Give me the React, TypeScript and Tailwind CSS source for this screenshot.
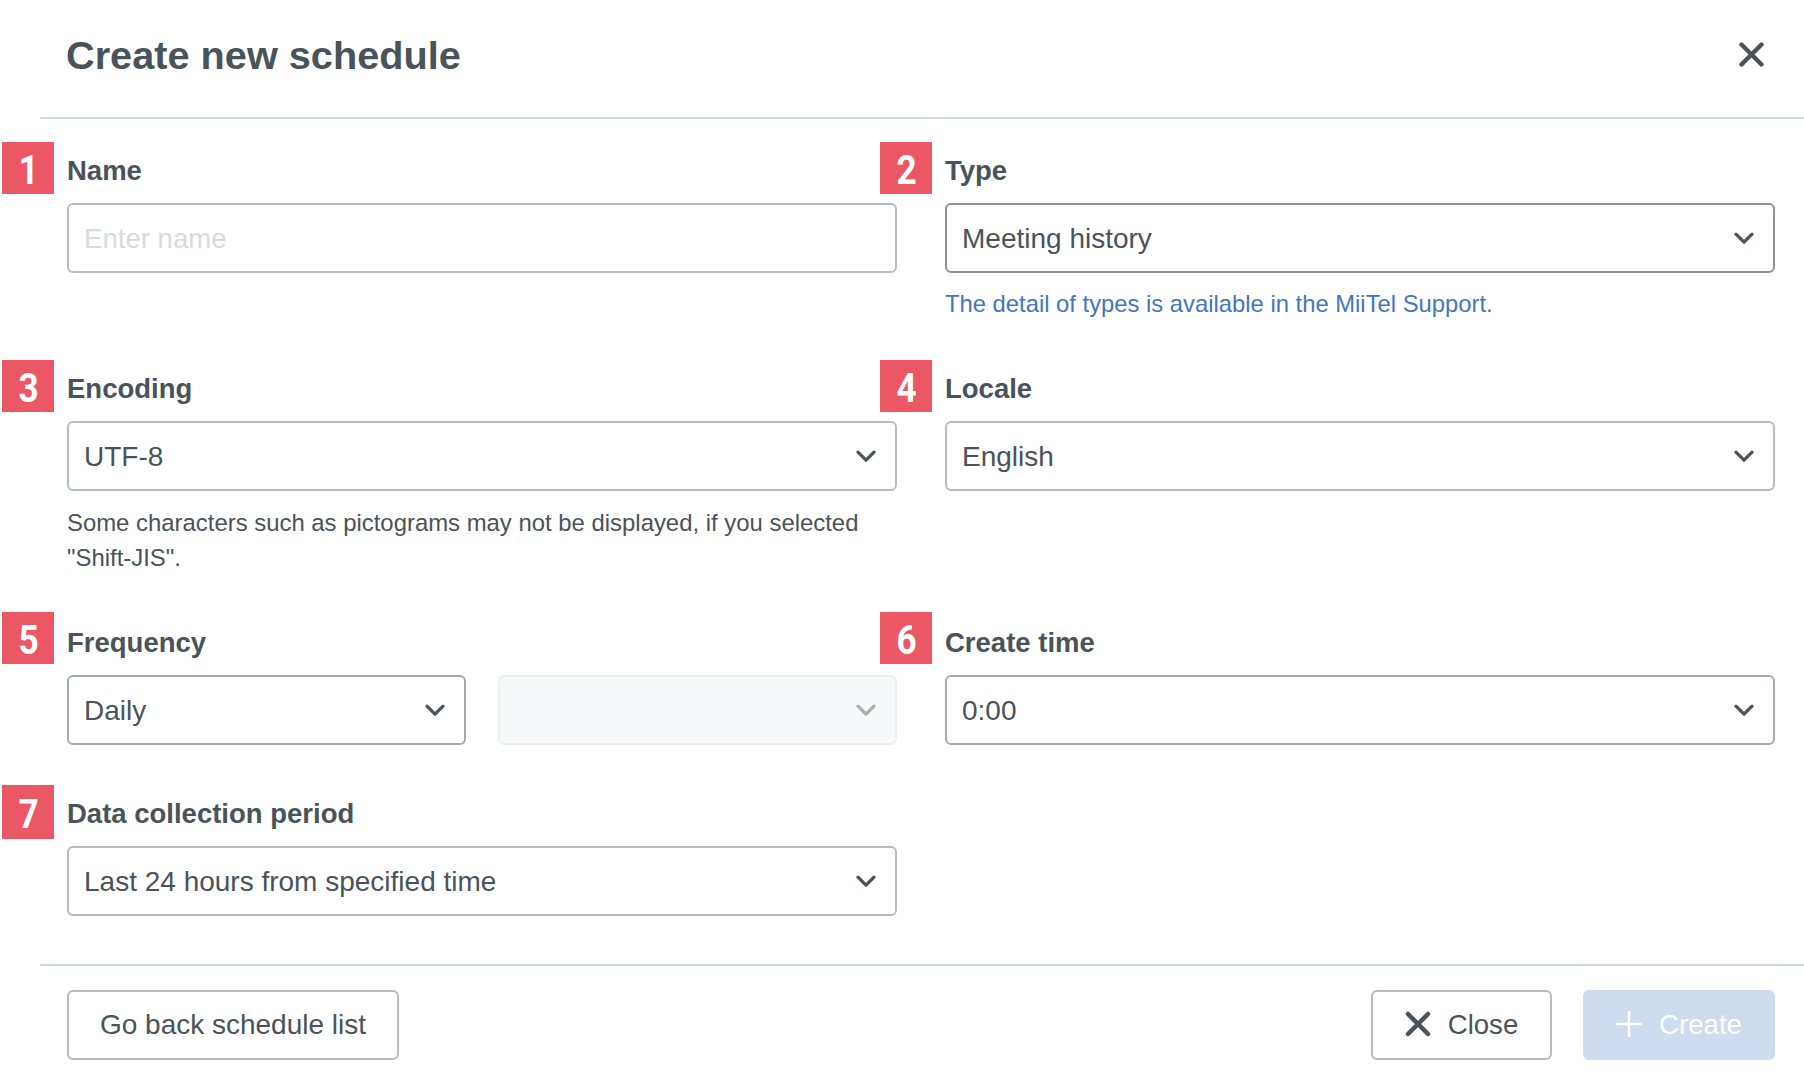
import React from "react";

const fontCls = "font-['Liberation_Sans',Arial,sans-serif]";

function Badge({ n, size = "base" }: { n: string; size?: "base" | "high" | "tall" }) {
  const box =
    size === "tall"
      ? "top-[-9px] h-[54px]"
      : size === "high"
        ? "top-[-11px] h-[52px]"
        : "top-[-9px] h-[52px]";
  return (
    <span
      className={`absolute left-[-65px] flex w-[52px] items-center justify-center bg-[#ec5766] pt-[5px] font-['Roboto',sans-serif] font-bold text-white ${box}`}
    >
      <span className="scale-x-[0.88] text-[40px] leading-none">{n}</span>
    </span>
  );
}

function Chevron({ muted }: { muted?: boolean }) {
  return (
    <svg width="20" height="13" viewBox="0 0 20 13" fill="none" className="shrink-0">
      <path
        d="M2 2.2 L10 10.2 L18 2.2"
        stroke={muted ? "#a9aeb2" : "#4a5359"}
        strokeWidth="3.2"
        strokeLinecap="round"
        strokeLinejoin="round"
      />
    </svg>
  );
}

function Select({
  value,
  borderClass = "border-[#b4bcc4]",
}: {
  value: string;
  borderClass?: string;
}) {
  return (
    <div
      role="combobox"
      aria-expanded="false"
      className={`flex h-[70px] items-center justify-between rounded-[6px] border-2 bg-white pl-[15px] pr-[19px] text-[28px] text-[#4a5359] ${borderClass}`}
    >
      <span className="pt-[1px]">{value}</span>
      <Chevron />
    </div>
  );
}

function Label({ n, text, size }: { n: string; text: string; size?: "base" | "high" | "tall" }) {
  return (
    <div className="relative mb-[12px] flex h-[40px] items-center text-[27.5px] font-bold text-[#4a5359]">
      <Badge n={n} size={size} />
      {text}
    </div>
  );
}

export default function App() {
  return (
    <div className={`h-[1080px] w-[1804px] overflow-hidden bg-white ${fontCls}`}>
      <header className="ml-[40px] flex h-[119px] items-center justify-between border-b-2 border-[#d3d8dc] pl-[26px] pr-[40px]">
        <h1 className="pb-[5px] text-[39.7px] font-bold text-[#4a5359]">Create new schedule</h1>
        <svg width="25" height="25" viewBox="0 0 25 25" fill="none" className="mb-[8px]">
          <path d="M2.5 2.5 L22.5 22.5 M22.5 2.5 L2.5 22.5" stroke="#4a5359" strokeWidth="4.4" strokeLinecap="round" />
        </svg>
      </header>

      <main className="pl-[67px] pr-[29px] pt-[32px]">
        <div className="mb-[48px] grid grid-cols-2 gap-x-[48px]">
          <div>
            <Label n="1" text="Name" />
            <input
              placeholder="Enter name"
              className="h-[70px] w-full rounded-[6px] border-2 border-[#b4bcc4] bg-white px-[15px] pt-[1px] text-[27.6px] text-[#4a5359] outline-none placeholder:text-[#d6dbdf]"
            />
          </div>
          <div>
            <Label n="2" text="Type" />
            <Select value="Meeting history" borderClass="border-[#8a9299]" />
            <p className="mt-[13px] text-[23.8px] leading-[35px] text-[#4476bb]">
              The detail of types is available in the MiiTel Support.
            </p>
          </div>
        </div>

        <div className="mb-[48px] grid grid-cols-2 gap-x-[48px]">
          <div>
            <Label n="3" text="Encoding" />
            <Select value="UTF-8" />
            <p className="mt-[14px] text-[23.9px] leading-[35px] text-[#4a5359]">
              Some characters such as pictograms may not be displayed, if you selected "Shift-JIS".
            </p>
          </div>
          <div>
            <Label n="4" text="Locale" />
            <Select value="English" />
          </div>
        </div>

        <div className="mb-[49px] grid grid-cols-2 gap-x-[48px]">
          <div>
            <Label n="5" text="Frequency" size="high" />
            <div className="grid grid-cols-2 gap-x-[32px]">
              <Select value="Daily" borderClass="border-[#a3abb3]" />
              <div className="flex h-[70px] items-center justify-end rounded-[6px] border-2 border-[#eceef0] bg-[#f7f8fa] pr-[19px]">
                <Chevron muted />
              </div>
            </div>
          </div>
          <div>
            <Label n="6" text="Create time" size="high" />
            <Select value="0:00" borderClass="border-[#a3abb3]" />
          </div>
        </div>

        <div className="mb-[48px] grid grid-cols-2 gap-x-[48px]">
          <div>
            <Label n="7" text="Data collection period" size="tall" />
            <Select value="Last 24 hours from specified time" />
          </div>
        </div>
      </main>

      <footer className="ml-[40px] flex items-center justify-between border-t-2 border-[#d3d8dc] pl-[27px] pr-[29px] pt-[24px]">
        <button className="flex h-[70px] w-[332px] items-center justify-center rounded-[6px] border-2 border-[#b4bcc4] bg-white text-[28px] text-[#4a5359]">
          Go back schedule list
        </button>
        <div className="flex items-center gap-x-[31px]">
          <button className="flex h-[70px] w-[181px] items-center justify-center gap-x-[17px] rounded-[6px] border-2 border-[#b4bcc4] bg-white text-[27.6px] text-[#4a5359]">
            <svg width="26" height="26" viewBox="0 0 26 26" fill="none" className="mb-[2px]">
              <path d="M3 3 L23 23 M23 3 L3 23" stroke="#4a5359" strokeWidth="4.5" strokeLinecap="round" />
            </svg>
            Close
          </button>
          <button className="flex h-[70px] w-[192px] items-center justify-center gap-x-[17px] rounded-[6px] bg-[#cedcf2] text-[27.6px] text-white">
            <svg width="26" height="26" viewBox="0 0 26 26" fill="none" className="mb-[2px]">
              <path d="M13 1 V25 M1 13 H25" stroke="#ffffff" strokeWidth="2.6" strokeLinecap="round" />
            </svg>
            Create
          </button>
        </div>
      </footer>
    </div>
  );
}
